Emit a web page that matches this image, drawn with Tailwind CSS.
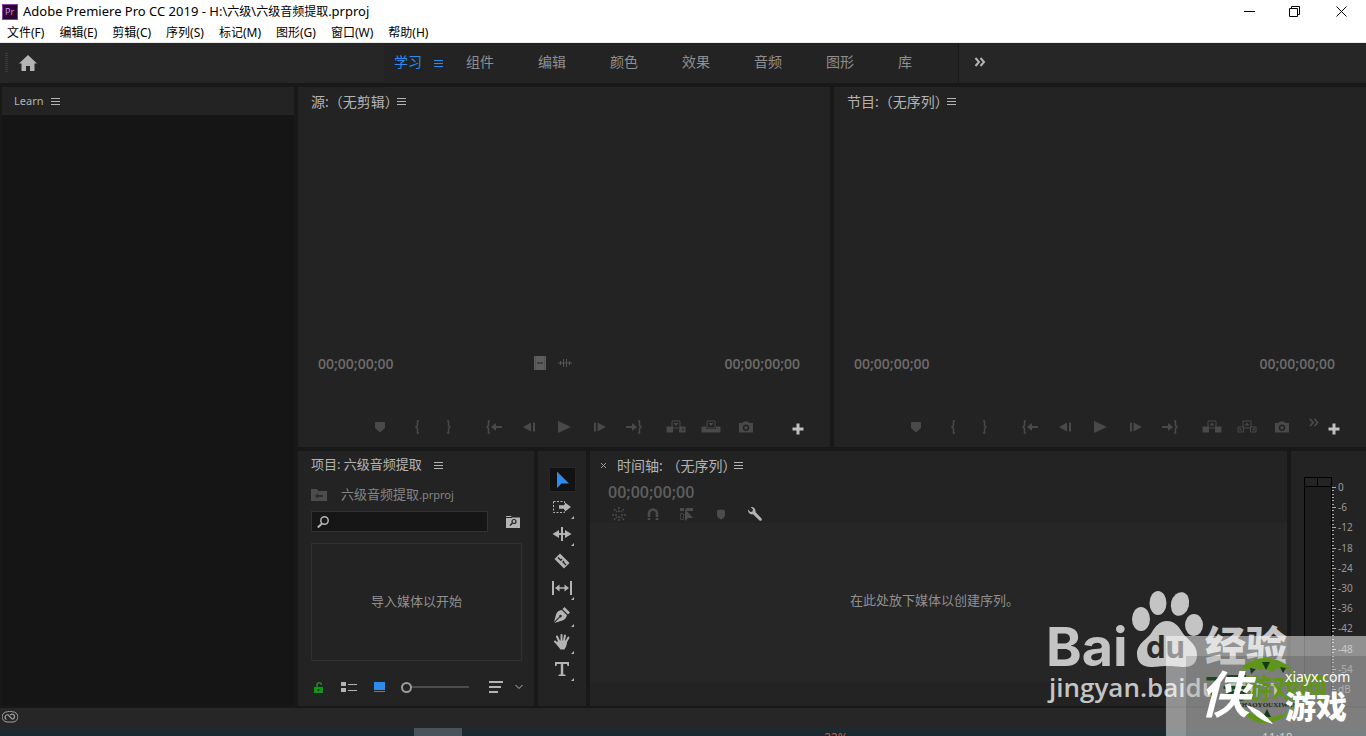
<!DOCTYPE html>
<html lang="zh-CN">
<head>
<meta charset="utf-8">
<meta name="viewport" content="width=device-width, initial-scale=1">
<title>Adobe Premiere Pro CC 2019</title>
<script src="https://cdn.jsdelivr.net/npm/@tailwindcss/browser@4"></script>
</head>
<body class="relative flex h-screen flex-col overflow-hidden bg-[#181818] font-['Noto_Sans','Noto_Sans_CJK_SC',sans-serif] text-[#b4b4b4]">

<svg class="hidden" aria-hidden="true">
  <symbol id="menu" viewBox="0 0 9 9"><path d="M0 1.500h9M0 4.500h9M0 7.500h9" stroke="currentColor" fill="none"/></symbol>
  <symbol id="marker" viewBox="0 0 20 20"><path d="M5 5h10v6L10 15.500 5 11z" fill="currentColor"/></symbol>
  <symbol id="in" viewBox="0 0 20 20"><path d="M12 4h-1.500v4.500L9 10l1.500 1.500V16H12" stroke="currentColor" stroke-width="1.500" fill="none"/></symbol>
  <symbol id="out" viewBox="0 0 20 20"><path d="M8 4h1.500v4.500L11 10l-1.500 1.500V16H8" stroke="currentColor" stroke-width="1.500" fill="none"/></symbol>
  <symbol id="goin" viewBox="0 0 20 20"><path d="M6 4H4.500v4.500L3 10l1.500 1.500V16H6" stroke="currentColor" stroke-width="1.500" fill="none"/><path d="M7 10l5-4v3h6v2h-6v3z" fill="currentColor"/></symbol>
  <symbol id="goout" viewBox="0 0 20 20"><path d="M14 4h1.500v4.500L17 10l-1.500 1.500V16H14" stroke="currentColor" stroke-width="1.500" fill="none"/><path d="M13 10L8 6v3H2v2h6v3z" fill="currentColor"/></symbol>
  <symbol id="back" viewBox="0 0 20 20"><path d="M12 5.500v9L4 10zM14 5.500h2v9h-2z" fill="currentColor"/></symbol>
  <symbol id="play" viewBox="0 0 20 20"><path d="M4 4l13 6-13 6z" fill="currentColor"/></symbol>
  <symbol id="fwd" viewBox="0 0 20 20"><path d="M8.500 5.500v9L17 10zM5 5.500h2v9H5z" fill="currentColor"/></symbol>
  <symbol id="insert" viewBox="0 0 20 20"><path d="M.5 9.500H7v6H.5zM14 9.500h5.500v6H13V12h1zM16 11.500v2h1.500v-2z" fill="currentColor" fill-rule="evenodd"/><path d="M6 4h8v7H6z" stroke="currentColor" fill="none"/><path d="M7.500 6h5L10 9z" fill="currentColor"/></symbol>
  <symbol id="overwrite" viewBox="0 0 20 20"><path d="M.5 9.500H5V12h10V9.500h4.500v6H.5z" fill="currentColor"/><path d="M6 4h8v7H6z" stroke="currentColor" fill="none"/><path d="M7.500 6h5L10 9z" fill="currentColor"/></symbol>
  <symbol id="lift" viewBox="0 0 20 20"><path d="M.5 9.500H7v6H.5zM13 9.500h6.500v6H13z" fill="currentColor"/><path d="M6 4h8v7H6z" stroke="currentColor" fill="none"/><path d="M7.500 8.500h5L10 5.500z" fill="currentColor"/></symbol>
  <symbol id="extract" viewBox="0 0 20 20"><path d="M1 10h5.500v5H1zM13.500 10H19v5h-5.500zM6 4h8v7H6z" stroke="currentColor" fill="none"/><path d="M2.500 11v3L5 12.500zM17.500 11v3L15 12.500zM7.500 8.500h5L10 5.500z" fill="currentColor"/></symbol>
  <symbol id="camera" viewBox="0 0 20 20"><path d="M3 6h3.500l1.500-1.500h4L13.500 6H17v9.500H3zM10 7.500a3.200 3.200 0 100 6.400 3.200 3.200 0 000-6.400zm0 1.500a1.700 1.700 0 110 3.400 1.700 1.700 0 010-3.400z" fill="currentColor" fill-rule="evenodd"/></symbol>
  <symbol id="plus" viewBox="0 0 12 12"><path d="M6 .5v11M.5 6h11" stroke="currentColor" stroke-width="3" fill="none"/></symbol>
  <symbol id="more" viewBox="0 0 12 10"><path d="M1.500 1l3.500 4-3.500 4M6.500 1L10 5 6.500 9" stroke="currentColor" stroke-width="2" fill="none"/></symbol>
  <symbol id="corner" viewBox="0 0 4 4"><path d="M4 0v4H0z" fill="currentColor"/></symbol>
</svg>

<header class="shrink-0 border-b border-[#ececec] bg-white text-black">
  <div class="flex h-[23px] items-center">
    <svg class="ml-[2px] h-4 w-4" viewBox="0 0 16 16"><path d="M0 0h16v16H0z" fill="#8a3fa0"/><path d="M1 1h14v14H1z" fill="#2a0634"/><text x="3" y="11" font-size="9" fill="#d98cf0" font-family="Noto Sans">Pr</text></svg>
    <h1 class="ml-[5px] text-[13px] leading-5">Adobe Premiere Pro CC 2019 - H:\<span class="text-[12px]">六级</span>\<span class="text-[12px]">六级音频提取</span>.prproj</h1>
    <div class="ml-auto flex h-full">
      <button aria-label="最小化" class="flex w-[46px] items-center justify-center"><svg class="h-[11px] w-[11px]" viewBox="0 0 11 11"><path d="M0 5.500h11" stroke="#000"/></svg></button>
      <button aria-label="还原" class="flex w-[45px] items-center justify-center"><svg class="h-[11px] w-[11px]" viewBox="0 0 11 11"><path d="M.5 2.500h8v8h-8zM2.500 2.500v-2h8v8h-2" stroke="#000" fill="none"/></svg></button>
      <button aria-label="关闭" class="flex w-[49px] items-center justify-center"><svg class="h-[11px] w-[11px]" viewBox="0 0 11 11"><path d="M.5.5l10 10M10.500.5l-10 10" stroke="#000"/></svg></button>
    </div>
  </div>
  <nav class="flex h-[19px] items-center gap-[15px] pl-[7px] text-[12px] leading-[19px]">
    <button>文件(F)</button><button>编辑(E)</button><button>剪辑(C)</button><button>序列(S)</button><button>标记(M)</button><button>图形(G)</button><button>窗口(W)</button><button>帮助(H)</button>
  </nav>
</header>

<div class="flex h-10 shrink-0 items-stretch bg-[#262626]">
  <div class="flex w-[384px] items-center">
    <div class="ml-[5px] h-5 w-[3px] bg-[repeating-linear-gradient(#3c3c3c_0_1px,transparent_1px_2px)]"></div>
    <button aria-label="主页" class="ml-[11px]"><svg class="h-4 w-[18px]" viewBox="0 0 18 16"><path d="M9 0L0 8.500h2.500V16H7v-5h4v5h4.500V8.500H18z" fill="#b4b4b4"/></svg></button>
  </div>
  <nav class="flex items-center border-r border-[#1a1a1a] bg-[#232323] pb-[3px] pl-[10px] text-[14px] text-[#8f8f8f]">
    <div class="flex w-[72px] items-center text-[#2d8ceb]"><button class="w-[40px] text-left">学习</button><button aria-label="工作区菜单" class="pt-[3px]"><svg class="h-[9px] w-[9px] text-[#2d8ceb]"><use href="#menu"/></svg></button></div>
    <button class="w-[72px] text-left">组件</button><button class="w-[72px] text-left">编辑</button><button class="w-[72px] text-left">颜色</button><button class="w-[72px] text-left">效果</button><button class="w-[72px] text-left">音频</button><button class="w-[72px] text-left">图形</button><button class="w-[60px] text-left">库</button>
  </nav>
  <button aria-label="更多工作区" class="flex w-[42px] items-center justify-center pb-[2px]"><svg class="h-[10px] w-3"><use href="#more"/></svg></button>
</div>

<main class="flex min-h-0 flex-1 gap-1 pt-1 pl-[2px]">
  <section class="flex w-[292px] shrink-0 flex-col bg-[#151515]">
    <h2 class="flex h-7 items-center bg-[#232323] pl-3 text-[11px]"><span class="w-[37px]">Learn</span><svg class="h-[9px] w-[9px]"><use href="#menu"/></svg></h2>
  </section>

  <div class="flex min-w-0 flex-1 flex-col gap-1">
    <div class="grid min-h-0 flex-1 grid-cols-2 gap-1">
      <section class="flex flex-col bg-[#232323]">
        <h2 class="flex h-7 items-center pl-[13px] text-[14px]"><span>源:（无剪辑）</span><svg class="-ml-[2px] h-[9px] w-[9px]"><use href="#menu"/></svg></h2>
        <div class="mt-auto flex h-10 items-center justify-between pr-[30px] pl-5 font-['Open_Sans',sans-serif] text-[14px] font-semibold text-[#6c6c6c]">
          <span>00;00;00;00</span>
          <span class="flex items-center gap-3 pr-3">
            <svg class="h-[14px] w-3" viewBox="0 0 12 14"><path d="M0 0h12v14H0z" fill="#5d5d5d"/><path d="M3 7h6" stroke="#222"/><path d="M1.500 0v14M10.500 0v14" stroke="#484848" stroke-dasharray="1 1"/></svg>
            <svg class="h-[10px] w-[14px]" viewBox="0 0 14 10"><path d="M0 5h14M2.500 3v4M5.500 1v8M8.500 1v8M11.500 3v4" stroke="#555" fill="none"/></svg>
          </span>
          <span>00;00;00;00</span>
        </div>
        <div class="mt-[34px] mb-[10px] grid h-5 grid-cols-[1fr_auto_1fr] items-center text-[#494949]">
          <span></span>
          <div class="flex items-center pr-[2px]">
            <button aria-label="添加标记" class="mr-[17px]"><svg class="h-5 w-5"><use href="#marker"/></svg></button>
            <div class="mr-[25px] flex gap-3"><button aria-label="标记入点"><svg class="h-5 w-5"><use href="#in"/></svg></button><button aria-label="标记出点"><svg class="h-5 w-5"><use href="#out"/></svg></button></div>
            <div class="mr-[22px] flex gap-[15px]"><button aria-label="转到入点"><svg class="h-5 w-5"><use href="#goin"/></svg></button><button aria-label="后退一帧"><svg class="h-5 w-5"><use href="#back"/></svg></button><button aria-label="播放"><svg class="h-5 w-5"><use href="#play"/></svg></button><button aria-label="前进一帧"><svg class="h-5 w-5"><use href="#fwd"/></svg></button><button aria-label="转到出点"><svg class="h-5 w-5"><use href="#goout"/></svg></button></div>
            <div class="flex gap-[15px]"><button aria-label="插入"><svg class="h-5 w-5"><use href="#insert"/></svg></button><button aria-label="覆盖"><svg class="h-5 w-5"><use href="#overwrite"/></svg></button><button aria-label="导出帧"><svg class="h-5 w-5"><use href="#camera"/></svg></button></div>
          </div>
          <button aria-label="按钮编辑器" class="mr-[26px] justify-self-end pt-[3px] text-[#c0c0c0]"><svg class="h-3 w-3"><use href="#plus"/></svg></button>
        </div>
      </section>

      <section class="flex flex-col bg-[#232323]">
        <h2 class="flex h-7 items-center pl-[13px] text-[14px]"><span>节目:（无序列）</span><svg class="-ml-[2px] h-[9px] w-[9px]"><use href="#menu"/></svg></h2>
        <div class="mt-auto flex h-10 items-center justify-between pr-[31px] pl-5 font-['Open_Sans',sans-serif] text-[14px] font-semibold text-[#6c6c6c]">
          <span>00;00;00;00</span><span>00;00;00;00</span>
        </div>
        <div class="mt-[34px] mb-[10px] grid h-5 grid-cols-[1fr_auto_1fr] items-center text-[#494949]">
          <span></span>
          <div class="flex items-center pr-[2px]">
            <button aria-label="添加标记" class="mr-[17px]"><svg class="h-5 w-5"><use href="#marker"/></svg></button>
            <div class="mr-[25px] flex gap-3"><button aria-label="标记入点"><svg class="h-5 w-5"><use href="#in"/></svg></button><button aria-label="标记出点"><svg class="h-5 w-5"><use href="#out"/></svg></button></div>
            <div class="mr-[22px] flex gap-[15px]"><button aria-label="转到入点"><svg class="h-5 w-5"><use href="#goin"/></svg></button><button aria-label="后退一帧"><svg class="h-5 w-5"><use href="#back"/></svg></button><button aria-label="播放"><svg class="h-5 w-5"><use href="#play"/></svg></button><button aria-label="前进一帧"><svg class="h-5 w-5"><use href="#fwd"/></svg></button><button aria-label="转到出点"><svg class="h-5 w-5"><use href="#goout"/></svg></button></div>
            <div class="flex gap-[15px]"><button aria-label="提升"><svg class="h-5 w-5"><use href="#lift"/></svg></button><button aria-label="提取"><svg class="h-5 w-5"><use href="#extract"/></svg></button><button aria-label="导出帧"><svg class="h-5 w-5"><use href="#camera"/></svg></button></div>
          </div>
          <div class="mr-[26px] flex items-center gap-2 justify-self-end">
            <button aria-label="更多按钮" class="pb-[10px]"><svg class="h-[9px] w-3"><use href="#more"/></svg></button>
            <button aria-label="按钮编辑器" class="pt-[3px] text-[#c0c0c0]"><svg class="h-3 w-3"><use href="#plus"/></svg></button>
          </div>
        </div>
      </section>
    </div>

    <div class="flex h-[255px] shrink-0 gap-1">
      <section class="flex w-[236px] shrink-0 flex-col bg-[#232323] pr-3 pl-[13px]">
        <h2 class="flex h-7 shrink-0 items-center gap-3 text-[13px]"><span>项目: 六级音频提取</span><svg class="h-[9px] w-[9px]"><use href="#menu"/></svg></h2>
        <div class="flex h-8 shrink-0 items-center gap-[14px] text-[#858585]">
          <svg class="h-3 w-4" viewBox="0 0 16 12"><path d="M0 0h6l1.500 2H16v10H0z" fill="#4c4c4c"/><path d="M4 7l3-3v2h5v2H7v2z" fill="#2b2b2b"/></svg>
          <span class="text-[13px]">六级音频提取<span class="text-[11px]">.prproj</span></span>
        </div>
        <div class="flex shrink-0 items-center gap-[18px]">
          <label class="flex h-[21px] w-[177px] items-center border border-[#323232] bg-[#161616] pl-[5px]">
            <svg class="h-3 w-3 shrink-0" viewBox="0 0 12 12"><circle cx="7.500" cy="4.500" r="3.700" stroke="#b4b4b4" stroke-width="1.500" fill="none"/><path d="M5 7.500L.8 11.500" stroke="#b4b4b4" stroke-width="2"/></svg>
            <input type="text" aria-label="搜索" class="w-full min-w-0 bg-transparent px-1 text-[11px] outline-none">
          </label>
          <button aria-label="新建搜索素材箱"><svg class="h-3 w-[14px]" viewBox="0 0 14 12"><path d="M0 0h5l1 1.500h8V12H0z" fill="#b4b4b4"/><path d="M0 1.500h6" stroke="#232323"/><circle cx="8" cy="5.500" r="2" stroke="#232323" stroke-width="1.200" fill="none"/><path d="M6.500 7L4 9.500" stroke="#232323" stroke-width="1.500"/></svg></button>
        </div>
        <div class="mt-[11px] flex h-[118px] shrink-0 items-center justify-center border border-[#303030] text-[13px] text-[#8f8f8f]"><p>导入媒体以开始</p></div>
        <div class="flex flex-1 items-center pt-[7px] text-[#b4b4b4]">
          <button aria-label="锁定" class="ml-[3px]"><svg class="h-[11px] w-[10px]" viewBox="0 0 10 11"><path d="M0 5h9v6H0z" fill="#12941a"/><path d="M3 5V3a2.200 2.200 0 014.400 0" stroke="#12941a" stroke-width="1.500" fill="none"/><path d="M4.500 7v2" stroke="#232323" stroke-width="1.500"/></svg></button>
          <button aria-label="列表视图" class="ml-[17px]"><svg class="h-[11px] w-4" viewBox="0 0 16 11"><path d="M0 0h5v4H0zM0 6h5v4H0z" fill="currentColor"/><path d="M7 2.500h9M7 8.500h9" stroke="currentColor"/></svg></button>
          <button aria-label="图标视图" class="ml-[17px]"><svg class="h-[11px] w-[11px]" viewBox="0 0 11 11"><path d="M0 0h11v8H0zM0 9h11v1H0z" fill="#2d8ceb"/></svg></button>
          <input type="range" aria-label="缩放" min="0" max="100" value="0" class="ml-4 h-3 w-[68px] appearance-none bg-[linear-gradient(to_bottom,transparent_5px,#4c4c4c_5px,#4c4c4c_7px,transparent_7px)] [&::-webkit-slider-thumb]:h-[11px] [&::-webkit-slider-thumb]:w-[11px] [&::-webkit-slider-thumb]:appearance-none [&::-webkit-slider-thumb]:rounded-full [&::-webkit-slider-thumb]:border-2 [&::-webkit-slider-thumb]:border-[#9c9c9c] [&::-webkit-slider-thumb]:bg-[#232323]">
          <button aria-label="排序" class="ml-5"><svg class="h-3 w-[14px]" viewBox="0 0 14 12"><path d="M0 1h14M0 6h12M0 11h9" stroke="currentColor" stroke-width="2"/></svg></button>
          <button aria-label="排序选项" class="ml-3"><svg class="h-[6px] w-2" viewBox="0 0 8 6"><path d="M.5 1L4 4.500 7.500 1" stroke="currentColor" fill="none"/></svg></button>
        </div>
      </section>

      <section aria-label="工具" class="flex w-12 shrink-0 flex-col items-center gap-[2px] bg-[#232323] pt-4 text-[#b4b4b4]">
        <button aria-label="选择工具" class="flex h-[25px] w-[27px] items-center justify-center border border-[#1d2a2e] bg-[#121212]"><svg class="h-[18px] w-[14px]" viewBox="0 0 14 18"><path d="M2 .5v16.500l4.500-4.500H14z" fill="#2d8ceb"/></svg></button>
        <button aria-label="向前选择轨道工具" class="relative flex h-[25px] w-[27px] items-center justify-center"><svg class="h-5 w-5" viewBox="0 0 20 20"><path d="M1.500 4.500h11v11h-11z" stroke="currentColor" stroke-dasharray="2 1.500" fill="none"/><path d="M7 8.200h6V5.500l6 4.500-6 4.500v-2.700H7z" fill="currentColor"/></svg><svg class="absolute right-[2px] bottom-0 h-[3px] w-[3px]"><use href="#corner"/></svg></button>
        <button aria-label="波纹编辑工具" class="relative flex h-[25px] w-[27px] items-center justify-center"><svg class="h-5 w-5" viewBox="0 0 20 20"><path d="M10 3v14" stroke="currentColor" stroke-width="2"/><path d="M.5 10L7 6v3h6V6l6.500 4-6.500 4v-3H7v3z" fill="currentColor"/></svg><svg class="absolute right-[2px] bottom-0 h-[3px] w-[3px]"><use href="#corner"/></svg></button>
        <button aria-label="剃刀工具" class="flex h-[25px] w-[27px] items-center justify-center"><svg class="h-5 w-5" viewBox="0 0 20 20"><path d="M8 2.500l9.500 9.500-5.500 5.500L2.500 8z" fill="currentColor"/><path d="M6 6.500l3 3M11 11l3 3M8.500 9.500l1.500-1.500M10.500 11.500l1.500-1.500" stroke="#232323" stroke-width="1.300"/></svg></button>
        <button aria-label="外滑工具" class="relative flex h-[25px] w-[27px] items-center justify-center"><svg class="h-5 w-5" viewBox="0 0 20 20"><path d="M1 3v14M19 3v14" stroke="currentColor" stroke-width="2"/><path d="M3 10l4.500-3.500v2.700h5V6.500L17 10l-4.500 3.500v-2.700h-5v2.700z" fill="currentColor"/></svg><svg class="absolute right-[2px] bottom-0 h-[3px] w-[3px]"><use href="#corner"/></svg></button>
        <button aria-label="钢笔工具" class="relative flex h-[25px] w-[27px] items-center justify-center"><svg class="h-5 w-5" viewBox="0 0 20 20"><path d="M12.500 2l5.500 5.500-2 2L10.500 4zM9.800 5l5.200 5.200c-.8 3-2.500 4.600-4.500 5.300L2.500 18 8 12.300a1.300 1.300 0 10-.7-.8L2 17l2.200-8C5 6.800 7 5.300 9.800 5z" fill="currentColor"/></svg><svg class="absolute right-[2px] bottom-0 h-[3px] w-[3px]"><use href="#corner"/></svg></button>
        <button aria-label="手形工具" class="relative flex h-[25px] w-[27px] items-center justify-center"><svg class="h-5 w-5" viewBox="0 0 20 20"><path d="M7 9L5 4.500M9.500 8.500V3M12 8.500l1-5M14 10l2.500-4.500M6.500 13L3 9.500" stroke="currentColor" stroke-width="2" stroke-linecap="round"/><path d="M6 8.500h8.500L15 11c-.3 3-1.500 4.500-2.500 6.500H8.500C7 15.500 5 13.500 4.500 11.500z" fill="currentColor"/></svg><svg class="absolute right-[2px] bottom-0 h-[3px] w-[3px]"><use href="#corner"/></svg></button>
        <button aria-label="文字工具" class="relative flex h-[25px] w-[27px] items-center justify-center"><svg class="h-5 w-5" viewBox="0 0 20 20"><path d="M3 3h14v4h-1.500L15 5h-3.800v10.300l2.300.5V17h-7v-1.200l2.300-.5V5H5l-.5 2H3z" fill="currentColor"/></svg><svg class="absolute right-[2px] bottom-0 h-[3px] w-[3px]"><use href="#corner"/></svg></button>
      </section>

      <section class="flex min-w-0 flex-1 flex-col bg-[#232323]">
        <h2 class="flex h-7 items-center pl-[11px] text-[14px]"><button aria-label="关闭面板" class="mr-[11px]"><svg class="h-[5px] w-[5px]" viewBox="0 0 5 5"><path d="M0 0l5 5M5 0L0 5" stroke="#999"/></svg></button><span>时间轴: （无序列）</span><svg class="-ml-[2px] h-[9px] w-[9px]"><use href="#menu"/></svg></h2>
        <p class="h-[26px] pl-[18px] font-['Open_Sans',sans-serif] text-[16px] leading-[26px] font-semibold text-[#5f5f5f]">00;00;00;00</p>
        <div class="flex h-[18px] items-center gap-5 pl-[22px] text-[#4c4c4c]">
          <button aria-label="嵌套"><svg class="h-[14px] w-[14px]" viewBox="0 0 14 14"><path d="M7 0v5M7 9v5M2 2l3 3M12 2L9 5M0 8h5M9 8h5M2 13l3-3M12 13L9 10" stroke="currentColor" stroke-width="1.500" stroke-dasharray="2 1"/></svg></button>
          <button aria-label="对齐"><svg class="h-[14px] w-[14px]" viewBox="0 0 14 14"><path d="M3 13V6.500a4 4 0 018 0V13" stroke="currentColor" stroke-width="2.600" fill="none"/><path d="M1 10.500h12" stroke="#232323"/></svg></button>
          <button aria-label="链接选择项"><svg class="h-[14px] w-[14px]" viewBox="0 0 14 14"><path d="M0 1h4v3H0zM6 1h7v3H6zM5 2v12l3-3h5z" fill="currentColor"/><path d="M.5 6.500h3v6h-3z" stroke="currentColor" stroke-dasharray="2 1" fill="none"/></svg></button>
          <button aria-label="添加标记"><svg class="h-[14px] w-[14px]" viewBox="0 0 14 14"><path d="M3 3.500Q7 1.500 11 3.500V8q0 2.500-4 4.500Q3 10.500 3 8z" fill="currentColor"/></svg></button>
          <button aria-label="时间轴显示设置"><svg class="h-[14px] w-[14px]" viewBox="0 0 14 14"><path d="M2.500 0L5 2.300 4.500 4.500 2.300 5 0 2.500C-.3 5.500 2 8 5 7.300l6.500 6.200c1.500 1 3-.5 2-2L7.500 5C8 2 5.500-.5 2.500 0z" fill="#b4b4b4"/></svg></button>
        </div>
        <div class="flex flex-1 items-center justify-center bg-[#262626] pr-2 pb-[3px] text-[13px] text-[#8f8f8f]"><p>在此处放下媒体以创建序列。</p></div>
        <div class="h-6"></div>
      </section>

      <section aria-label="音频仪表" class="flex w-[75px] shrink-0 bg-[#232323] pt-[26px] pl-[13px] text-[#999]">
        <div class="flex h-[222px] w-7 flex-col border border-black bg-[#1e1e1e]"><div class="grid h-[9px] grid-cols-2 border-b border-black bg-[#242424]"><span class="border-r border-black"></span></div></div>
        <div id="scale" class="flex h-[222px] flex-col justify-between text-[10px] leading-5"></div>
      </section>
    </div>
  </div>
</main>

<footer class="shrink-0">
  <div class="mt-[2px] flex h-5 items-center bg-[#262626] pb-[2px] pl-[2px]">
    <svg class="h-3 w-4" viewBox="0 0 16 12"><path d="M5.500.8A5 5 0 005 11h6A5 5 0 0010.500.8 5 5 0 005.500.8z" stroke="#a0a0a0" fill="none"/><path d="M4.500 8.500A2.500 2.500 0 016 3.800L10 8a2.500 2.500 0 100-5L8 4" stroke="#a0a0a0" stroke-width="1.200" fill="none"/></svg>
  </div>
  <div class="relative flex h-2 overflow-hidden bg-linear-to-b from-[#1f2a2d] to-[#16292f] pl-[414px]">
    <div class="h-2 w-12 bg-[#48545a]"></div>
    <span class="absolute top-[2px] left-[824px] text-[12px] leading-4 text-[#d8503c]">22%</span>
    <span class="absolute top-[2px] left-[1262px] text-[12px] leading-4 text-[#dcdcdc]">11:18</span>
  </div>
</footer>

<!-- Watermarks laid over the window -->
<svg class="pointer-events-none absolute right-0 bottom-0 h-[156px] w-[326px]" viewBox="0 0 326 156">
  <g fill="#c4c4c4">
    <text x="6" y="86" font-family="Inter" font-weight="700" font-size="54">Bai</text>
    <ellipse cx="101" cy="39" rx="9" ry="12"/><ellipse cx="118" cy="23" rx="8.500" ry="12"/><ellipse cx="140" cy="24" rx="9" ry="12" transform="rotate(14 140 24)"/><ellipse cx="154" cy="45" rx="9" ry="11"/>
    <path d="M127 41c8 0 12 6 15 11 4 7 15 11 15 23 0 9-6 12-13 12-6 0-10-1-17-1s-10 1-16 1c-9 0-14-5-14-13 0-11 11-15 15-22 3-5 7-11 15-11z"/>
    <text x="165" y="81" font-family="Noto Sans CJK SC" font-weight="900" font-size="41">经验</text>
    <text x="9" y="117" font-family="Open Sans" font-weight="600" font-size="26">jingyan.baidu.com</text>
  </g>
  <text x="106" y="78" font-family="Inter" font-weight="700" font-size="31" fill="#2a2a2a">du</text>
  <path d="M126 56h200v100H126z" fill="#fff" fill-opacity=".5"/>
  <path d="M146 76h180v80H146z" fill="#000" fill-opacity=".14"/>
  <g>
    <circle cx="227" cy="110" r="31" fill="none" stroke="#6a9a1c" stroke-width="1.500"/>
    <path d="M201 88q22-20 50 0-9 5-14-1-4 9-11 1-7 5-11-1-7 4-14 1zM198 125q26 20 49 7-9 12-24 11-15-1-25-18z" fill="#5f961a"/>
    <path d="M222 82l4 8 4-8zM240 87l3 6 3-5zM210 88l1 6 5-5zM223 137l4-8 4 8z" fill="#173a1c"/>
    <text x="165" y="119" font-family="Noto Sans CJK SC" font-weight="700" font-size="29" fill="#174a20">7号</text>
    <text x="204" y="119" font-family="Noto Sans CJK SC" font-weight="700" font-size="28" fill="#5f961a">游戏网</text>
    <text x="197" y="127" font-family="Liberation Serif" font-weight="700" font-size="7" fill="#1c2a1c">ZHAOYOUXIWANG</text>
  </g>
  <g fill="#fff">
    <text x="160" y="133" font-family="Noto Sans CJK SC" font-weight="700" font-style="italic" font-size="50">侠</text>
    <path d="M206 125q14 3 27 19-15-3-27-19z"/>
    <text x="245" y="102" font-family="Noto Sans" font-size="14">xiayx.com</text>
    <text x="245" y="138" font-family="Noto Sans CJK SC" font-weight="900" font-size="31">游戏</text>
  </g>
</svg>

<script>
  // One row per scale mark: a major tick in the middle, minor ticks around it.
  const marks = ['0', '-6', '-12', '-18', '-24', '-30', '-36', '-42', '-48', '-54', 'dB'];
  document.getElementById('scale').innerHTML = marks.map((m, i) => {
    const above = i === 0 ? '' : 'M0 .5h2M0 3.500h2M0 7.500h2';
    return `<div class="flex h-5 gap-[2px]"><svg class="h-5 w-[4px]" viewBox="0 0 4 20"><path d="${above}M0 10.500h4M0 13.500h2M0 17.500h2" stroke="#aaa" fill="none"/></svg><span>${m}</span></div>`;
  }).join('');
</script>
</body>
</html>
